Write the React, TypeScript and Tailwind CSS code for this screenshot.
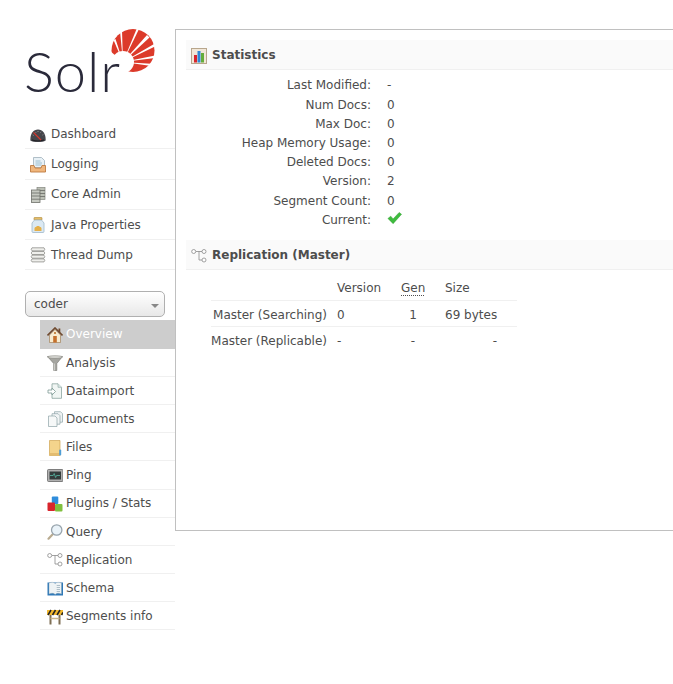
import React from "react";

// small hand drawn icons, 16x16 box
const icons: Record<string, React.ReactNode> = {
  dashboard: (
    <>
      <path d="M.3 13.500C.3 6 3.500 2.500 8 2.500s7.700 3.500 7.700 11c-2 1-4 1.500-7.700 1.500S2.300 14.500.3 13.500Z" fill="#45454b" />
      <path d="M2 13c3 1 9 1 12 0" fill="none" stroke="#1e1e22" strokeWidth="1.200" />
      <path d="M3.500 5.500l7.500 7.500" stroke="#d8362c" strokeWidth="1.100" />
      <path d="M5.500 5l.5.700M8 4v1M11 4.800l-.5.800M13.300 7.500l-.8.500M2.800 8l.8.400" stroke="#bbb" strokeWidth=".7" />
    </>
  ),
  logging: (
    <>
      <path d="M3.500 .5h8l3 3v7h-11Z" fill="#e8f1f6" stroke="#9fb0bb" strokeWidth=".8" />
      <path d="M5.500 4h5M5.500 6h6.500M5.500 8h6" stroke="#93b9cd" strokeWidth=".9" />
      <path d="M.5 8.500h3.500l1 2.500h6l1-2.500h3.500v6.500H.5Z" fill="#f0b67c" stroke="#bd7c42" strokeWidth=".9" />
    </>
  ),
  core: (
    <>
      <rect x="7" y=".5" width="8" height="12" fill="#bcc0b6" stroke="#84867f" strokeWidth=".7" />
      <rect x="1.500" y="3" width="8.500" height="12.500" fill="#c7cac2" stroke="#6e706a" strokeWidth=".8" />
      <path d="M1.500 6h8.500M1.500 9h8.500M1.500 12.200h8.500M10 3.500h5M10 6.500h5M10 9.500h5" stroke="#686a64" strokeWidth=".8" />
    </>
  ),
  java: (
    <>
      <rect x="4" y=".5" width="8" height="2.500" rx=".5" fill="#e6bd68" stroke="#ad8838" strokeWidth=".6" />
      <path d="M4.500 3h7L14 6v8.500a1 1 0 0 1-1 1H3a1 1 0 0 1-1-1V6Z" fill="#dbe9f3" stroke="#9fb7c9" strokeWidth=".8" />
      <path d="M4.500 14v-2.500c0-1 .7-1.500 1.500-1.500.2-1.500 3.800-1.500 4 0 .8 0 1.500.5 1.500 1.500V14Z" fill="#e5b04a" />
    </>
  ),
  thread: (
    <>
      <path d="M2 .8h12l.8 1.500-.8 1.500H2L1.200 2.300Z" fill="#efefec" stroke="#8f8f8c" strokeWidth=".8" />
      <path d="M2 4.500h12l.8 1.500-.8 1.500H2L1.200 6Z" fill="#efefec" stroke="#8f8f8c" strokeWidth=".8" />
      <path d="M2 8.200h12l.8 1.500-.8 1.500H2L1.200 9.700Z" fill="#efefec" stroke="#8f8f8c" strokeWidth=".8" />
      <path d="M2 11.900h12l.8 1.500-.8 1.500H2l-.8-1.500Z" fill="#efefec" stroke="#8f8f8c" strokeWidth=".8" />
    </>
  ),
  overview: (
    <>
      <path d="M2.500 8L8 2.500 13.500 8v7.500h-11Z" fill="#f8ecd0" stroke="#97734c" strokeWidth=".6" />
      <path d="M.5 8.500L8 1l7.500 7.500" fill="none" stroke="#6f4a30" strokeWidth="1.600" />
      <rect x="6.200" y="9" width="3.600" height="6.500" fill="#c5702c" />
      <rect x="7" y="5" width="2" height="2" fill="#c98a4a" />
      <rect x="11.500" y="1.500" width="1.800" height="4" fill="#6f4a30" />
    </>
  ),
  analysis: (
    <>
      <path d="M.5 1.500h15L9.800 8.500v7H6.700v-7Z" fill="#a5a5a0" stroke="#73736f" strokeWidth=".6" />
      <path d="M7.500 8.500v7" stroke="#d8d8d4" strokeWidth=".8" />
      <ellipse cx="8" cy="2" rx="7.500" ry="1.300" fill="#dadad6" stroke="#77776f" strokeWidth=".5" />
    </>
  ),
  dataimport: (
    <>
      <path d="M5 .8h6l3.500 3.500v11H5Z" fill="#f1f6f4" stroke="#8ba5a0" strokeWidth=".8" />
      <path d="M11 .8v3.500h3.500" fill="#dce8e5" stroke="#8ba5a0" strokeWidth=".6" />
      <path d="M1 7h4V5l3.500 3.500L5 12v-2H1Z" fill="#fff" stroke="#7d9a94" strokeWidth=".8" />
    </>
  ),
  documents: (
    <>
      <path d="M7.500.7h6l2 2v8.500h-8Z" fill="#eef2f3" stroke="#8ea3a8" strokeWidth=".7" />
      <path d="M5 2.700h6l2 2v8.500H5Z" fill="#f1f4f5" stroke="#8ea3a8" strokeWidth=".7" />
      <path d="M1.500 5h6.500l2 2v8.500H1.500Z" fill="#f6f8f8" stroke="#8ea3a8" strokeWidth=".7" />
    </>
  ),
  files: (
    <>
      <path d="M2.500.5h10.500v15H2.500Z" fill="#f4d48c" stroke="#cfa352" strokeWidth=".7" />
      <path d="M2.500 13h10.500v2.500H2.500Z" fill="#e3bc70" />
      <rect x="12.200" y="9.500" width="2" height="6" rx="1" fill="#4f9ed6" />
    </>
  ),
  ping: (
    <>
      <rect x=".5" y="1.500" width="15.500" height="12" rx="1" fill="#b0b0b0" stroke="#666" strokeWidth=".8" />
      <rect x="2.500" y="3.500" width="11.500" height="8" fill="#343c3c" />
      <path d="M3 7.500h3.200l1-2 1.400 4 1-2h3.400" fill="none" stroke="#5cc8b2" strokeWidth=".7" />
    </>
  ),
  plugins: (
    <>
      <rect x="4.800" y=".5" width="6.500" height="7.500" rx="1" fill="#2f8ddc" />
      <rect x=".5" y="6.500" width="7.500" height="8.500" rx="1" fill="#d8252c" />
      <rect x="8" y="8" width="7.500" height="7.500" rx="1" fill="#80bf3e" />
    </>
  ),
  query: (
    <>
      <path d="M1.500 14.700L5.500 10.500" stroke="#b9ab90" strokeWidth="2.200" strokeLinecap="round" />
      <circle cx="9.700" cy="6" r="5.200" fill="#eaf3f9" stroke="#98a4ad" strokeWidth="1.300" />
    </>
  ),
  replication: (
    <>
      <circle cx="2.700" cy="3.500" r="2" fill="#fff" stroke="#8a8a8a" strokeWidth=".8" />
      <circle cx="13" cy="3.500" r="2" fill="#fff" stroke="#8a8a8a" strokeWidth=".8" />
      <circle cx="13" cy="12" r="2" fill="#fff" stroke="#8a8a8a" strokeWidth=".8" />
      <path d="M5 3.500h6M8 3.500V12h3" fill="none" stroke="#8a8a8a" strokeWidth=".8" />
    </>
  ),
  schema: (
    <>
      <path d="M.5 1.500h15.500v13H.5Z" fill="#2f79b8" />
      <path d="M2 2c2.300-1 4.700-1 6.200.5C9.700 1 12.200 1 14.500 2v11c-2.300-1-4.800-1-6.300.5C6.700 12 4.300 12 2 13Z" fill="#eef3f5" stroke="#7b98ac" strokeWidth=".4" />
      <path d="M9.700 4.500h3.300M9.700 6.500h3.300M9.700 8.500h3.300M9.700 10.500h3.300" stroke="#9db0bc" strokeWidth=".8" />
    </>
  ),
  segments: (
    <>
      <rect x="0" y="1" width="16" height="5" fill="#f3b92f" />
      <path d="M1 6L4 1M5.500 6L8.500 1M10 6L13 1M14.500 6L16 3.500" stroke="#222" strokeWidth="1.500" />
      <path d="M3.500 6v9.500M12.500 6v9.500" stroke="#7f6f55" strokeWidth="2" />
      <path d="M3.500 9.500h9" stroke="#c9b58c" strokeWidth="1.500" />
    </>
  ),
  stats: (
    <>
      <rect x=".5" y=".5" width="15" height="15" fill="#f1e7d8" stroke="#b8a68c" />
      <rect x="3" y="7" width="3" height="7.500" fill="#d8252c" />
      <rect x="6.500" y="3" width="3" height="11.500" fill="#2f87d6" />
      <rect x="10" y="5" width="3" height="9.500" fill="#65ad3a" />
    </>
  ),
};

function Icon({ name }: { name: string }) {
  return (
    <svg viewBox="0 0 16 16" className="h-4 w-4 shrink-0">
      {icons[name]}
    </svg>
  );
}

const menu = [
  ["dashboard", "Dashboard"],
  ["logging", "Logging"],
  ["core", "Core Admin"],
  ["java", "Java Properties"],
  ["thread", "Thread Dump"],
];

const coreMenu = [
  ["analysis", "Analysis"],
  ["dataimport", "Dataimport"],
  ["documents", "Documents"],
  ["files", "Files"],
  ["ping", "Ping"],
  ["plugins", "Plugins / Stats"],
  ["query", "Query"],
  ["replication", "Replication"],
  ["schema", "Schema"],
  ["segments", "Segments info"],
];

const stats = [
  ["Last Modified:", "-"],
  ["Num Docs:", "0"],
  ["Max Doc:", "0"],
  ["Heap Memory Usage:", "0"],
  ["Deleted Docs:", "0"],
  ["Version:", "2"],
  ["Segment Count:", "0"],
];

function Logo() {
  return (
    <div className="relative h-[89px] w-[150px]">
      <svg viewBox="0 0 44 44" className="absolute left-[86px] top-0 h-[44px] w-[44px]">
        <circle cx="22" cy="21.500" r="21.500" fill="#dc3a2a" />
        {/* bite out of the lower left, rays fan out of it */}
        <circle cx="12" cy="33" r="11" fill="#fff" />
        <polygon points="12,33 -1,22 -1,45 18,45" fill="#fff" />
        <polygon points="12,33 26,-1 28.500,-1" fill="#fff" />
        <polygon points="12,33 36,6 38.500,8.500" fill="#fff" />
        <polygon points="12,33 44,14.500 44,17.500" fill="#fff" />
        <polygon points="12,33 44,26.500 44,29" fill="#fff" />
        <polygon points="12,33 44,35 44,37.500" fill="#fff" />
        <polygon points="12,33 9,2 11,2" fill="#fff" />
        <polygon points="12,33 2.500,11 4.500,10" fill="#fff" />
      </svg>
      <span className="absolute left-[-1px] top-[6px] font-['Lato'] text-[56px] font-light leading-[72px] tracking-[1px] text-[#2a2a3a]">
        Solr
      </span>
    </div>
  );
}

function Header({ icon, title }: { icon: string; title: string }) {
  return (
    <div className="flex h-[30px] items-center gap-[5px] border-b border-[#f0f0f0] bg-[#fafafa] pl-[5px] pt-[2px]">
      <Icon name={icon} />
      <span className="font-bold">{title}</span>
    </div>
  );
}

export default function App() {
  return (
    <div className="flex min-h-[684px] overflow-hidden bg-white pt-[29px] font-['DejaVu_Sans',sans-serif] text-[12px] leading-[19.2px] text-[#4d4d4d]">
      <div className="ml-[25px] w-[150px] shrink-0">
        <Logo />
        <div className="mt-[1.2px]">
          {menu.map(([icon, label]) => (
            <div key={label} className="flex h-[30.2px] items-center gap-[5px] border-b border-[#f0f0f0] pl-[5px] pt-[1.8px]">
              <Icon name={icon} />
              <span>{label}</span>
            </div>
          ))}
        </div>
        <div className="mt-[20.8px] flex h-[26px] w-[140px] items-center justify-between rounded-[5px] border border-[#b0b0b0] bg-gradient-to-b from-white to-[#e8e8e8] pl-[8px] pr-[5px] pt-[1px]">
          <span>coder</span>
          <span className="mt-[3px] h-0 w-0 border-x-[4px] border-t-[4px] border-x-transparent border-t-[#888]" />
        </div>
        <div className="mt-[3.5px] ml-[15px]">
          <div className="flex h-[28.2px] items-center gap-[3px] bg-[#cdcdcd] pl-[7px] text-white">
            <Icon name="overview" />
            <span>Overview</span>
          </div>
          {coreMenu.map(([icon, label]) => (
            <div key={label} className="flex h-[28.2px] items-center gap-[3px] border-b border-[#f0f0f0] pl-[7px] pt-[1.8px]">
              <Icon name={icon} />
              <span>{label}</span>
            </div>
          ))}
        </div>
      </div>

      <div className="h-[502px] w-[600px] shrink-0 border border-[#c0c0c0] bg-white pl-[10px] pt-[10px]">
        <Header icon="stats" title="Statistics" />
        <div className="mt-[6.4px]">
          {stats.map(([label, value]) => (
            <div key={label} className="flex">
              <span className="w-[185px] text-right">{label}</span>
              <span className="ml-[16px]">{value}</span>
            </div>
          ))}
          <div className="flex h-[19.2px] items-center">
            <span className="w-[185px] text-right">Current:</span>
            <svg viewBox="0 0 16 16" className="ml-[16px] mb-[3px] h-[15px] w-[15px]">
              <path d="M1 8l3-2.500 2.500 3L13 1.500l2.500 2L6.500 13.500Z" fill="#3ebc3e" stroke="#2a9a2a" strokeWidth=".5" />
            </svg>
          </div>
        </div>

        <div className="mt-[10px]">
          <Header icon="replication" title="Replication (Master)" />
        </div>
        <div className="ml-[25px] mt-[7.6px] w-[306px]">
          <div className="flex h-[23px] items-center whitespace-nowrap border-b border-[#f0f0f0] pt-[1px]">
            <span className="ml-[126px] w-[64px]">Version</span>
            <span className="w-[44px] underline decoration-dotted underline-offset-2">Gen</span>
            <span>Size</span>
          </div>
          <div className="flex h-[26px] items-center whitespace-nowrap border-b border-[#f0f0f0] pt-[5px]">
            <span className="w-[116px] text-right">Master (Searching)</span>
            <span className="ml-[10px] w-[64px]">0</span>
            <span className="w-[24px] text-center">1</span>
            <span className="ml-[20px]">69 bytes</span>
          </div>
          <div className="flex h-[26px] items-center whitespace-nowrap pt-[4px]">
            <span className="w-[116px] text-right">Master (Replicable)</span>
            <span className="ml-[10px] w-[64px]">-</span>
            <span className="w-[24px] text-center">-</span>
            <span className="ml-[20px] w-[52px] text-right">-</span>
          </div>
        </div>
      </div>
    </div>
  );
}
